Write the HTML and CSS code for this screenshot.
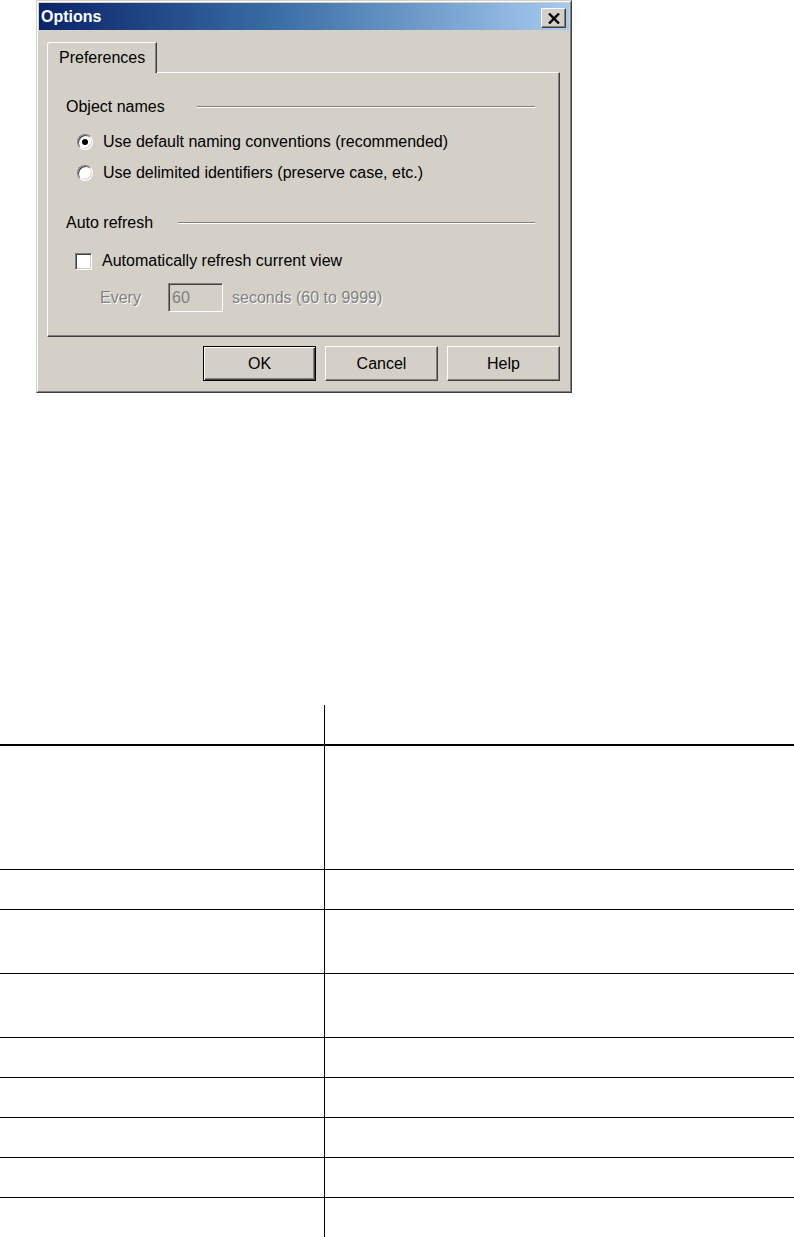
FILE: index.html
```html
<!DOCTYPE html>
<html lang="en">
<head>
<meta charset="utf-8">
<title>Options</title>
<link rel="stylesheet" href="styles.css">
</head>
<body>
<div class="window">
  <div class="frame">
    <div class="titlebar">
      <span class="title">Options</span>
      <button class="close" aria-label="Close">
        <svg width="12" height="11" viewBox="0 0 12 11" aria-hidden="true">
          <path d="M1 0.5 L11 10.5 M11 0.5 L1 10.5" stroke="#000" stroke-width="2.4" fill="none"/>
        </svg>
      </button>
    </div>
    <div class="body">
      <div class="tabs"><div class="tab">Preferences</div></div>
      <div class="panel">
        <div class="group">
          <span class="group-label label-object">Object names</span>
          <span class="etch"></span>
        </div>
        <div class="radios">
          <label class="opt"><input class="radio" type="radio" name="naming" checked><span>Use default naming conventions (recommended)</span></label>
          <label class="opt"><input class="radio" type="radio" name="naming"><span>Use delimited identifiers (preserve case, etc.)</span></label>
        </div>
        <div class="group group-refresh">
          <span class="group-label label-refresh">Auto refresh</span>
          <span class="etch"></span>
        </div>
        <label class="check"><input class="box" type="checkbox"><span>Automatically refresh current view</span></label>
        <div class="every">
          <span class="dis every-label">Every</span>
          <input class="num" type="text" value="60" disabled>
          <span class="dis">seconds (60 to 9999)</span>
        </div>
      </div>
      <div class="buttons">
        <button class="btn btn-default">OK</button>
        <button class="btn">Cancel</button>
        <button class="btn">Help</button>
      </div>
    </div>
  </div>
</div>

<div class="grid">
  <div class="cell c1 h-head"></div><div class="cell c2 h-head"></div>
  <div class="cell c1 h-4"></div><div class="cell c2 h-4"></div>
  <div class="cell c1 h-1"></div><div class="cell c2 h-1"></div>
  <div class="cell c1 h-2"></div><div class="cell c2 h-2"></div>
  <div class="cell c1 h-2"></div><div class="cell c2 h-2"></div>
  <div class="cell c1 h-1"></div><div class="cell c2 h-1"></div>
  <div class="cell c1 h-1"></div><div class="cell c2 h-1"></div>
  <div class="cell c1 h-1"></div><div class="cell c2 h-1"></div>
  <div class="cell c1 h-1"></div><div class="cell c2 h-1"></div>
  <div class="cell c1 h-1"></div><div class="cell c2 h-1"></div>
</div>
</body>
</html>
```

FILE: styles.css
```css
* { box-sizing: border-box; }

html, body {
  margin: 0;
  padding: 0;
  background: #fff;
}

body {
  font-family: "Liberation Sans", Arial, sans-serif;
  font-size: 16px;
  color: #000;
}

/* ---------- Window ---------- */
.window {
  width: 536px;
  height: 393px;
  margin-left: 36px;
  border: 1px solid;
  border-color: #d4d0c8 #404040 #404040 #d4d0c8;
  background: #d4d0c8;
}

.frame {
  height: 100%;
  border: 1px solid;
  border-color: #fff #808080 #808080 #fff;
  padding: 1px;
  display: flex;
  flex-direction: column;
}

.titlebar {
  height: 27px;
  flex: none;
  display: flex;
  align-items: flex-start;
  justify-content: space-between;
  background: linear-gradient(to right, #0a246a 0%, #3a6ea5 45%, #a6caf0 100%);
  padding: 0 3px 0 2px;
}

.title {
  color: #fff;
  font-weight: bold;
  font-size: 16px;
  line-height: 27px;
}

.close {
  width: 25px;
  height: 20px;
  margin-top: 5px;
  padding: 0;
  border: 1px solid;
  border-color: #fff #404040 #404040 #fff;
  box-shadow: inset -1px -1px 0 #808080;
  background: #d4d0c8;
  display: flex;
  align-items: center;
  justify-content: center;
}

.body {
  flex: 1;
  padding: 12px 9px 0 8px;
  display: flex;
  flex-direction: column;
}

/* ---------- Tabs ---------- */
.tabs {
  display: flex;
}

.tab {
  position: relative;
  z-index: 1;
  width: 110px;
  height: 31px;
  margin-bottom: -1px;
  padding: 5px 0 0 11px;
  line-height: 20px;
  background: #d4d0c8;
  border-top: 1px solid #fff;
  border-left: 1px solid #fff;
  border-right: 1px solid #404040;
  border-top-left-radius: 3px;
  box-shadow: inset -1px 0 0 #808080;
}

.panel {
  height: 265px;
  border: 1px solid;
  border-color: #fff #404040 #404040 #fff;
  box-shadow: inset -1px -1px 0 #808080;
  padding-top: 24px;
  display: flex;
  flex-direction: column;
}

.group {
  height: 20px;
  display: flex;
  align-items: center;
  padding-left: 18px;
  padding-right: 24px;
}

.group-refresh {
  margin-top: 30px;
}

.group-label {
  line-height: 20px;
  flex: none;
}

.label-object { width: 131px; }
.label-refresh { width: 112px; }

.etch {
  flex: 1;
  height: 2px;
  border-top: 1px solid #808080;
  border-bottom: 1px solid #fff;
}

.radios {
  margin-top: 15px;
  display: flex;
  flex-direction: column;
  gap: 11px;
  padding-left: 29px;
}

.opt,
.check {
  display: flex;
  align-items: center;
  gap: 10px;
  height: 20px;
  line-height: 20px;
}

.radio {
  appearance: none;
  -webkit-appearance: none;
  margin: 0;
  width: 16px;
  height: 16px;
  border-radius: 50%;
  border: 1px solid;
  border-color: #808080 #fff #fff #808080;
  box-shadow: inset 1px 1px 0 #404040, inset -1px -1px 0 #d4d0c8;
  background: #fff;
  display: grid;
  place-items: center;
}

.radio:checked::after {
  content: "";
  width: 6px;
  height: 6px;
  border-radius: 50%;
  background: #000;
}

.check {
  margin-top: 18px;
  padding-left: 27px;
}

.box {
  appearance: none;
  -webkit-appearance: none;
  margin: 0;
  width: 17px;
  height: 17px;
  border: 1px solid;
  border-color: #808080 #fff #fff #808080;
  box-shadow: inset 1px 1px 0 #404040, inset -1px -1px 0 #d4d0c8;
  background: #fff;
}

.every {
  margin-top: 12px;
  height: 29px;
  display: flex;
  align-items: center;
  padding-left: 52px;
}

.dis {
  color: #808080;
  text-shadow: 1px 1px 0 #fff;
  line-height: 20px;
}

.every-label {
  width: 68px;
}

.num {
  width: 55px;
  height: 29px;
  margin: 0 9px 0 0;
  padding: 0 0 0 3px;
  font: inherit;
  color: #808080;
  background: #d4d0c8;
  border: 1px solid;
  border-color: #808080 #fff #fff #808080;
  box-shadow: inset 1px 1px 0 #404040, inset -1px -1px 0 #d4d0c8;
}

/* ---------- Buttons ---------- */
.buttons {
  margin-top: 9px;
  display: flex;
  justify-content: flex-end;
  gap: 9px;
}

.btn {
  width: 113px;
  height: 35px;
  padding: 0;
  font: inherit;
  color: #000;
  background: #d4d0c8;
  border: 1px solid;
  border-color: #fff #404040 #404040 #fff;
  box-shadow: inset -1px -1px 0 #808080;
}

.btn-default {
  border: 1px solid #000;
  box-shadow: inset 1px 1px 0 #fff, inset -1px -1px 0 #404040, inset -2px -2px 0 #808080;
}

/* ---------- Table grid ---------- */
.grid {
  margin-top: 312px;
  display: grid;
  grid-template-columns: 325px 1fr;
}

.cell {
  border-bottom: 1px solid #000;
}

.c1 {
  border-right: 1px solid #000;
}

.h-head { height: 41px; border-bottom-width: 2px; }
.h-4 { height: 124px; }
.h-2 { height: 64px; }
.h-1 { height: 40px; }
```
